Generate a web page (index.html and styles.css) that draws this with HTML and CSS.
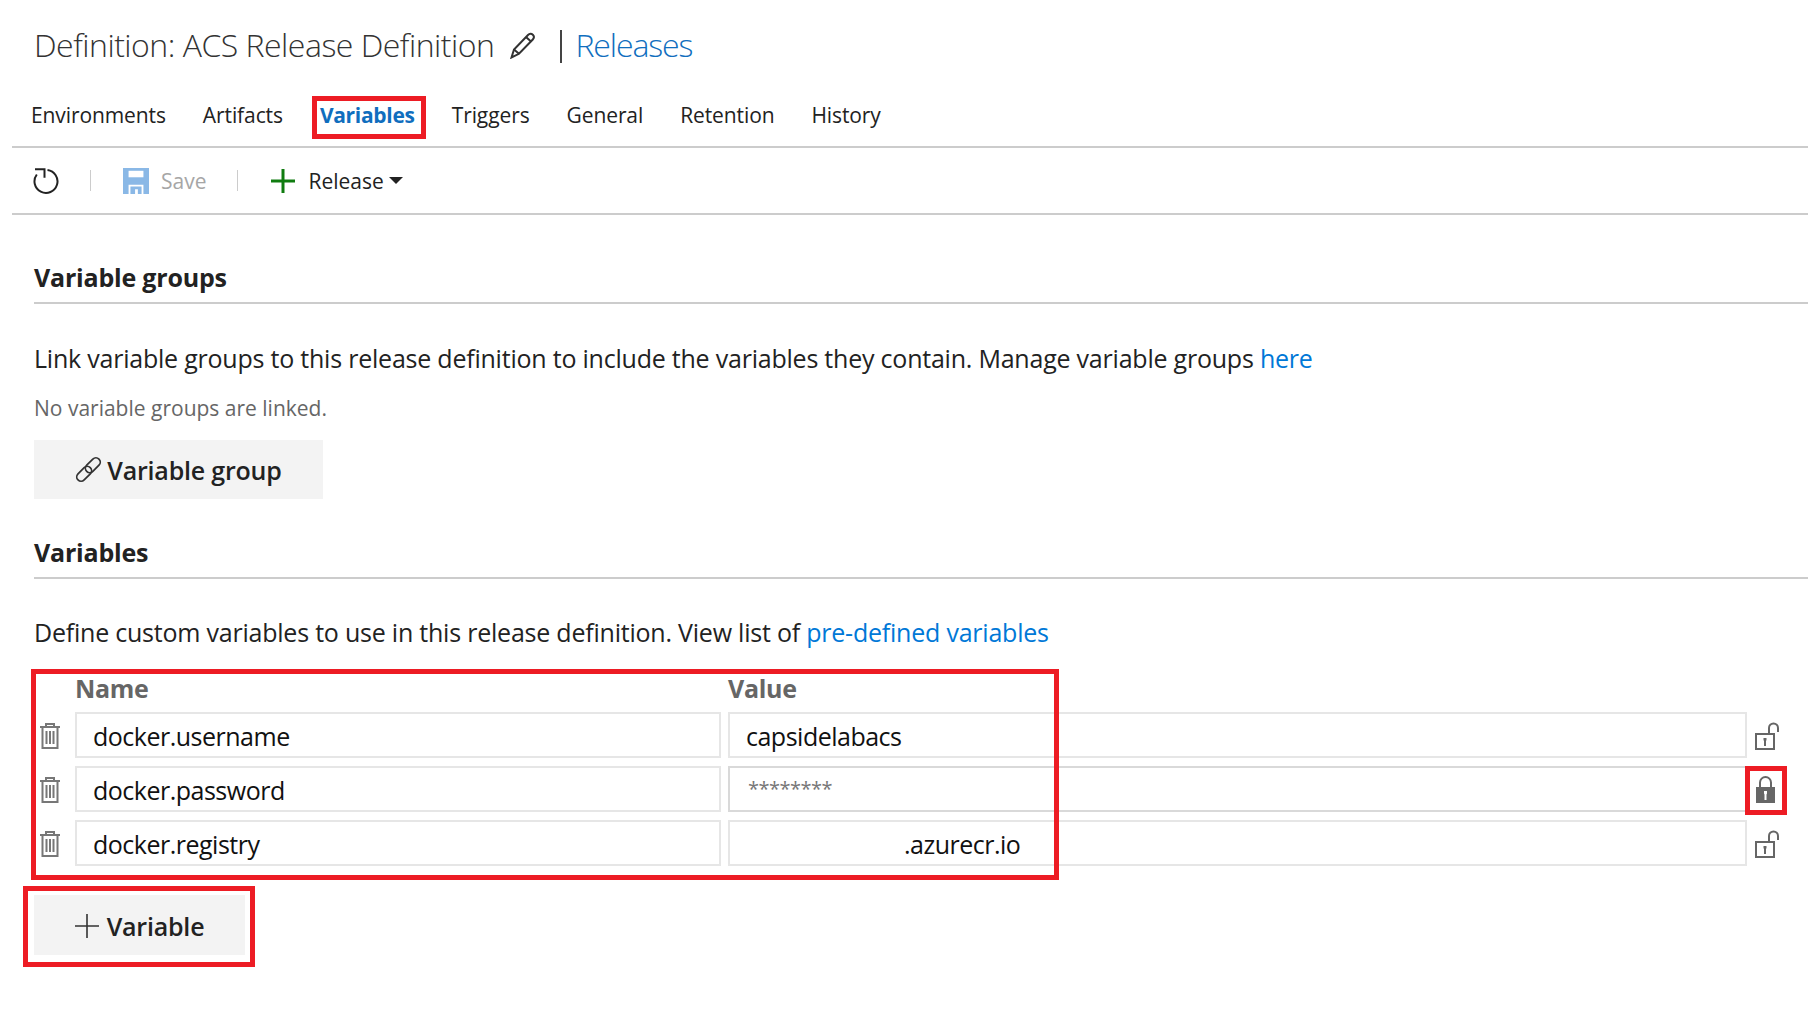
FILE: index.html
```html
<!DOCTYPE html>
<html lang="en">
<head>
    <meta charset="UTF-8">
    <meta name="viewport" content="width=device-width, initial-scale=1.0">
    <title>ACS Release Definition</title>
    <link rel="stylesheet" href="styles.css">
</head>
<body>
    <header class="title-row">
        <h1 class="title">Definition: ACS Release Definition</h1>
        <svg class="pencil" viewBox="0 0 26 28" width="26" height="28" fill="none" stroke="#333" stroke-width="2">
            <path d="M1.500 26.500l2.500-8L18 4c1.500-1.600 3.500-1.500 4.800-.2s1.400 3.200 0 4.700L9 22.800z"/>
            <path d="M4 18.500l5 4.300M16 6l5 4.500"/>
        </svg>
        <span class="title-bar"></span>
        <a class="title-link">Releases</a>
    </header>

    <nav class="tabs">
        <a class="tab">Environments</a>
        <a class="tab">Artifacts</a>
        <a class="tab tab-active">Variables<span class="annot annot-tab"></span></a>
        <a class="tab">Triggers</a>
        <a class="tab">General</a>
        <a class="tab">Retention</a>
        <a class="tab">History</a>
    </nav>

    <div class="toolbar">
        <svg class="tool-refresh" viewBox="0 0 26 26" width="26" height="26" fill="none" stroke="#222" stroke-width="2">
            <path d="M14.500 2A11.500 11.500 0 1 1 3.800 6.500"/>
            <path d="M2 1.200h9.500v8.500"/>
        </svg>
        <span class="tool-sep"></span>
        <svg class="tool-save" viewBox="0 0 28 28" width="26" height="26">
            <path fill="#8ab8e6" d="M0 0h28v28H22V18H6v10H0z"/>
            <path fill="#fff" d="M6 3h16v7H6z"/>
            <path fill="#8ab8e6" d="M8 28v-8h12v8h-4v-5h-3v5z"/>
        </svg>
        <span class="tool-label tool-disabled">Save</span>
        <span class="tool-sep tool-sep-2"></span>
        <svg class="tool-plus" viewBox="0 0 24 24" width="24" height="24">
            <path fill="#107c10" d="M10.500 0h3v10.500H24v3H13.500V24h-3V13.500H0v-3h10.500z"/>
        </svg>
        <span class="tool-label">Release</span>
        <span class="caret"></span>
    </div>

    <main class="content">
        <h2 class="section-head">Variable groups</h2>
        <p class="lead">Link variable groups to this release definition to include the variables they contain. Manage variable groups <a>here</a></p>
        <p class="muted">No variable groups are linked.</p>
        <button class="btn btn-group">
            <svg viewBox="0 0 28 28" width="27" height="27" fill="none" stroke="#333" stroke-width="1.800">
                <rect x="-9" y="-4.500" width="18" height="9" rx="4.500" transform="translate(9.500 18.500) rotate(-45)"/>
                <rect x="-9" y="-4.500" width="18" height="9" rx="4.500" transform="translate(18.500 9.500) rotate(-45)"/>
            </svg>
            Variable group
        </button>

        <h2 class="section-head section-vars">Variables</h2>
        <p class="lead lead-vars">Define custom variables to use in this release definition. View list of <a>pre-defined variables</a></p>

        <div class="var-table">
            <span class="annot annot-table"></span>
            <div class="var-head">
                <span class="col-name">Name</span>
                <span class="col-value">Value</span>
            </div>
            <div class="var-row">
                <span class="trash-cell">
                    <svg viewBox="0 0 22 28" width="22" height="28" fill="none" stroke="#777" stroke-width="2"><path d="M1 5h20M7 5V2h8v3M3.500 5v21h15V5M7.500 9v13M11 9v13M14.500 9v13"/></svg>
                </span>
                <input class="var-input col-name" value="docker.username" readonly>
                <input class="var-input col-value" value="capsidelabacs" readonly>
                <span class="lock-cell">
                    <svg viewBox="0 0 26 28" width="26" height="28" fill="none" stroke="#666" stroke-width="2"><path d="M2 12h18v15H2z"/><path d="M15 12V6a4.500 4.500 0 0 1 9 0v4"/><path fill="#666" stroke="none" d="M9.500 16h3v2l-.5 1v5h-2v-5l-.5-1z"/></svg>
                </span>
            </div>
            <div class="var-row">
                <span class="trash-cell">
                    <svg viewBox="0 0 22 28" width="22" height="28" fill="none" stroke="#777" stroke-width="2"><path d="M1 5h20M7 5V2h8v3M3.500 5v21h15V5M7.500 9v13M11 9v13M14.500 9v13"/></svg>
                </span>
                <input class="var-input col-name" value="docker.password" readonly>
                <input class="var-input col-value var-secret" value="********" readonly>
                <span class="lock-cell">
                    <span class="annot annot-lock"></span>
                    <svg viewBox="0 0 26 28" width="26" height="28"><path fill="none" stroke="#666" stroke-width="2" d="M6 12V6.500a5.500 5.500 0 0 1 11 0V12"/><path fill="#666" d="M2 11h19v16H2z"/><path fill="#fff" d="M10 15h3v2.500l-.5 1V24h-2v-5.500l-.5-1z"/></svg>
                </span>
            </div>
            <div class="var-row">
                <span class="trash-cell">
                    <svg viewBox="0 0 22 28" width="22" height="28" fill="none" stroke="#777" stroke-width="2"><path d="M1 5h20M7 5V2h8v3M3.500 5v21h15V5M7.500 9v13M11 9v13M14.500 9v13"/></svg>
                </span>
                <input class="var-input col-name" value="docker.registry" readonly>
                <input class="var-input col-value var-masked" value=".azurecr.io" readonly>
                <span class="lock-cell">
                    <svg viewBox="0 0 26 28" width="26" height="28" fill="none" stroke="#666" stroke-width="2"><path d="M2 12h18v15H2z"/><path d="M15 12V6a4.500 4.500 0 0 1 9 0v4"/><path fill="#666" stroke="none" d="M9.500 16h3v2l-.5 1v5h-2v-5l-.5-1z"/></svg>
                </span>
            </div>
        </div>

        <div class="add-wrap">
            <span class="annot annot-add"></span>
            <button class="btn btn-variable">
                <svg viewBox="0 0 24 24" width="24" height="24"><path fill="#333" d="M11.200 0h1.600v11.200H24v1.600H12.800V24h-1.600V12.800H0v-1.600h11.200z"/></svg>
                Variable
            </button>
        </div>
    </main>
</body>
</html>
```

FILE: styles.css
```css
body {
    margin: 0;
    font-family: "Open Sans", "Noto Sans", sans-serif;
    color: #222;
    background: #fff;
}
a {
    color: #0078d7;
}
.annot {
    position: absolute;
    border: 5px solid #ed1c24;
    box-sizing: border-box;
    pointer-events: none;
}

/* title */
.title-row {
    display: flex;
    align-items: center;
    height: 88px;
    padding: 0 0 2px 34px;
}
.title {
    margin: 0;
    font-size: 32px;
    font-weight: 300;
    letter-spacing: -0.5px;
    color: #333;
}
.pencil {
    margin-left: 16px;
    margin-top: 2px;
}
.title-bar {
    width: 2px;
    height: 33px;
    margin-left: 24px;
    margin-top: 5px;
    background: #444;
}
.title-link {
    margin-left: 13px;
    font-size: 32px;
    font-weight: 300;
    letter-spacing: -1.1px;
    color: #106ebe;
}

/* tabs */
.tabs {
    display: flex;
    align-items: center;
    gap: 37px;
    height: 50px;
    margin-left: 12px;
    padding: 0 0 6px 19px;
    border-bottom: 2px solid #ccc;
    font-size: 21px;
    letter-spacing: -0.1px;
}
.tab {
    position: relative;
    color: #222;
}
.tab-active {
    color: #106ebe;
    font-weight: 700;
    letter-spacing: -0.3px;
}
.annot-tab {
    top: -5px;
    left: -8px;
    right: -11px;
    bottom: -10px;
}

/* toolbar */
.toolbar {
    display: flex;
    align-items: center;
    height: 65px;
    margin-left: 12px;
    padding-left: 21px;
    border-bottom: 2px solid #ccc;
}
.tool-sep {
    width: 1px;
    height: 21px;
    margin: 0 32px 0 31px;
    background: #ccc;
}
.tool-sep-2 {
    margin: 0 33px 0 31px;
}
.tool-label {
    margin-left: 13px;
    font-size: 21px;
}
.tool-save + .tool-label {
    margin-left: 12px;
}
.tool-disabled {
    color: #a6a6a6;
}
.caret {
    width: 0;
    height: 0;
    margin-left: 5px;
    border-left: 7px solid transparent;
    border-right: 7px solid transparent;
    border-top: 7px solid #222;
}

/* content */
.content {
    padding: 47px 0 40px 34px;
}
.section-head {
    margin: 0;
    padding-bottom: 10px;
    font-size: 25px;
    line-height: 30px;
    font-weight: 700;
    letter-spacing: -0.2px;
    border-bottom: 2px solid #ccc;
}
.section-vars {
    margin-top: 38px;
}
.lead {
    margin: 36px 0 0;
    font-size: 25px;
    line-height: 36px;
    letter-spacing: -0.22px;
}
.lead-vars {
    margin-top: 35px;
}
.muted {
    margin: 17px 0 0;
    font-size: 21px;
    line-height: 30px;
    color: #666;
}
.btn {
    display: flex;
    align-items: center;
    justify-content: center;
    gap: 5px;
    margin-top: 17px;
    height: 59px;
    border: none;
    background: #f3f3f3;
    color: #222;
    font-family: inherit;
    font-size: 25px;
    font-weight: 600;
    letter-spacing: -0.2px;
}
.btn-group {
    width: 289px;
}
.btn-variable {
    width: 211px;
    margin-top: 0;
    height: 60px;
    padding-top: 2px;
    gap: 8px;
}
.add-wrap {
    position: relative;
    width: 211px;
    margin-top: 29px;
}
.annot-add {
    top: -9px;
    left: -11px;
    right: -10px;
    bottom: -12px;
}

/* variables table */
.var-table {
    position: relative;
    margin-top: 22px;
}
.annot-table {
    top: -3px;
    left: -3px;
    width: 1028px;
    height: 211px;
}
.var-head {
    display: flex;
    padding: 1px 0 0 41px;
    height: 39px;
    font-size: 25px;
    line-height: 30px;
    font-weight: 700;
    letter-spacing: -0.3px;
    color: #666;
}
.var-head .col-name {
    width: 653px;
    flex: none;
}
.var-row {
    display: flex;
    align-items: center;
    margin-bottom: 8px;
}
.trash-cell {
    display: flex;
    width: 41px;
    padding: 2px 0 0 5px;
    box-sizing: border-box;
}
.var-input {
    height: 46px;
    box-sizing: border-box;
    border: 2px solid #e6e6e6;
    padding: 2px 0 0 16px;
    font-family: inherit;
    font-size: 25px;
    letter-spacing: -0.5px;
    color: #111;
    outline: none;
}
.var-input.col-name {
    width: 646px;
    margin-right: 7px;
}
.var-input.col-value {
    width: 1019px;
}
.var-secret {
    border-color: #d9d9d9;
    padding: 0 0 2px 18px;
    font-size: 20px;
    color: #777;
}
.var-masked {
    padding-left: 174px;
}
.lock-cell {
    position: relative;
    display: flex;
    padding: 1px 0 0 7px;
}
.annot-lock {
    top: -9px;
    left: -2px;
    width: 42px;
    height: 49px;
}
```
